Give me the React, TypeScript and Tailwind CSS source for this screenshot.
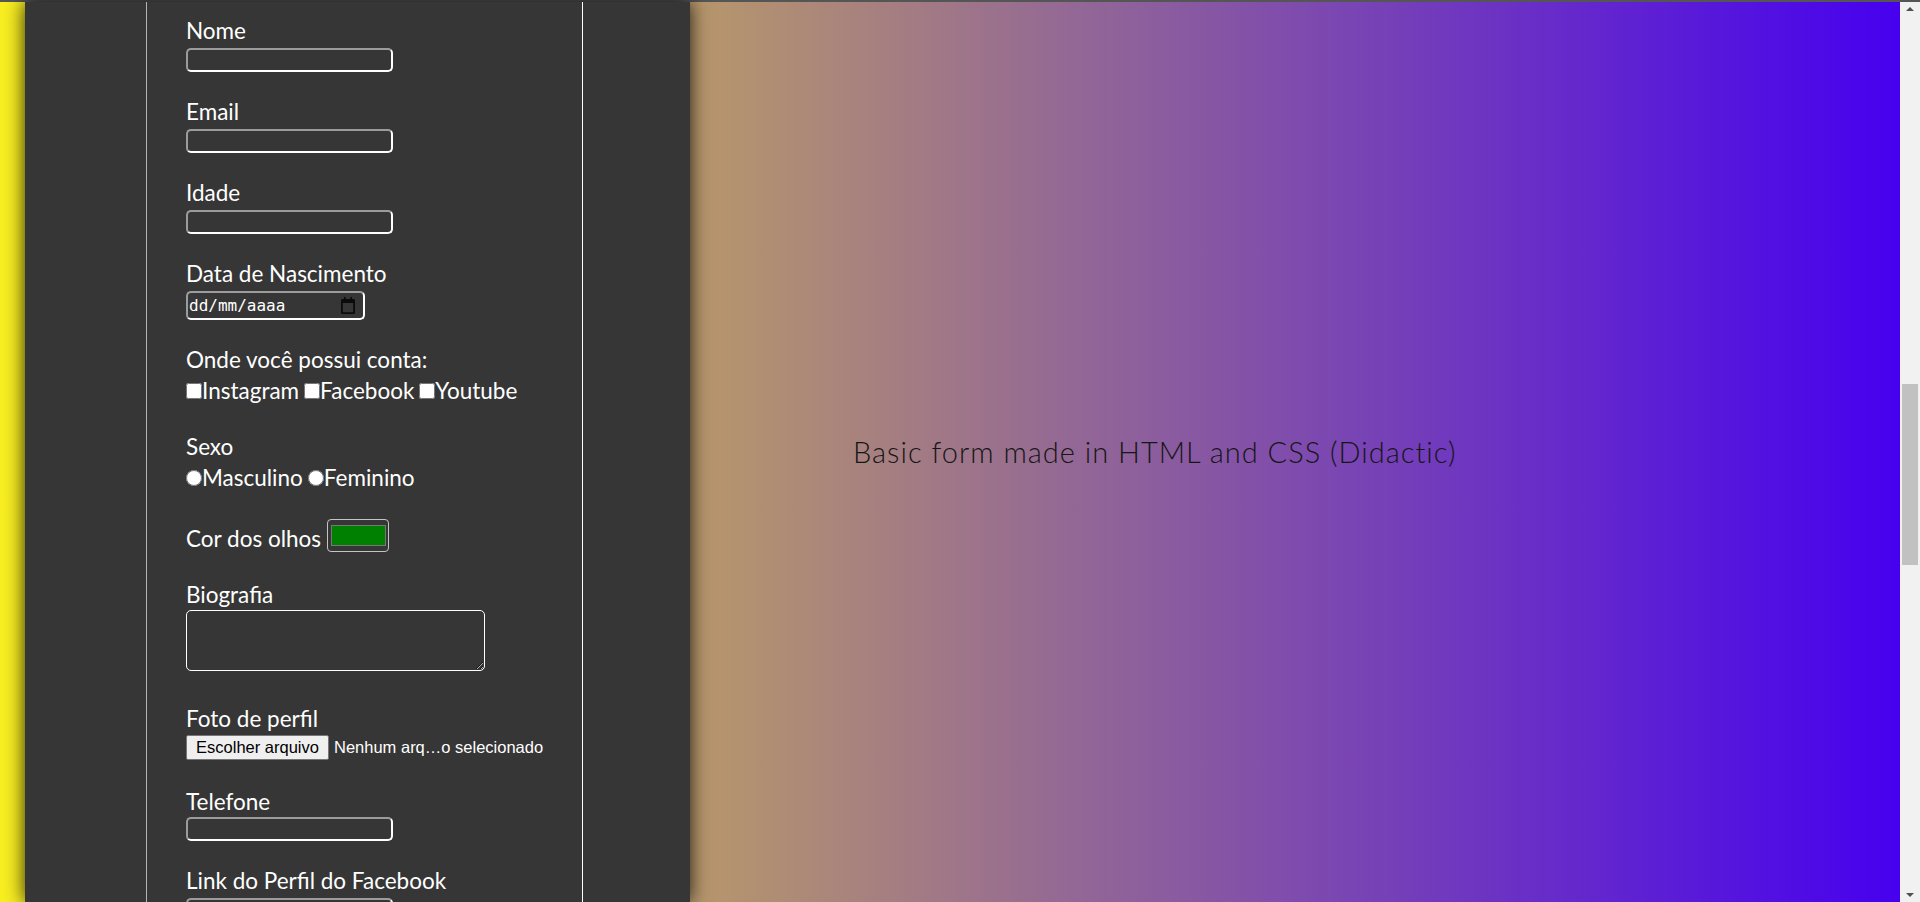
import React from 'react';

const labelCls = 'block h-[28px] text-[22.5px] leading-[28px] text-white';
const inputCls =
  'block h-[24px] w-[207px] rounded-[5px] border-2 border-white border-t-[#9c9c9c] border-l-[#9c9c9c] bg-transparent outline-none';

function Field({ label, mt }: { label: string; mt: string }): React.ReactElement {
  return (
    <div className={mt}>
      <label className={labelCls}>{label}</label>
      <input type="text" className={`mt-[3px] ${inputCls}`} />
    </div>
  );
}

function CalendarIcon(): React.ReactElement {
  return (
    <svg width="16" height="17" viewBox="0 0 16 17">
      <path
        d="M4 0v2H2.5A1.5 1.5 0 0 0 1 3.5v12A1.5 1.5 0 0 0 2.5 17h11a1.5 1.5 0 0 0 1.5-1.5v-12A1.5 1.5 0 0 0 13.5 2H12V0h-1.6v2H5.6V0H4zM2.8 6h10.4v9.2H2.8V6z"
        fill="#0b0b0b"
      />
    </svg>
  );
}

function Scrollbar(): React.ReactElement {
  return (
    <div className="flex w-[20px] flex-col items-center bg-[#f1f1f1]">
      <div className="mt-[5px] h-0 w-0 border-x-[4px] border-b-[4px] border-x-transparent border-b-[#505050]" />
      <div className="mt-[373px] h-[181px] w-[16px] bg-[#c1c1c1]" />
      <div className="mt-auto mb-[5px] h-0 w-0 border-x-[4px] border-t-[4px] border-x-transparent border-t-[#505050]" />
    </div>
  );
}

export default function App(): React.ReactElement {
  return (
    <div className="flex h-[902px] w-full flex-col overflow-hidden">
      <div className="h-[2px] bg-[#555555]" />
      <div className="flex min-h-0 flex-1">
        <div className="flex flex-1 bg-[linear-gradient(to_right,#f8ee20,#4600ef)]">
          <div className="ml-[25px] flex w-[665px] bg-[#363636] pl-[121px] shadow-[0_0_18px_rgba(0,0,0,0.85)]">
            <form className="w-[437px] border-l border-r border-l-[#b4b4b4] border-r-white pl-[39px] pt-[15px] font-['Lato',sans-serif]">
              <Field label="Nome" mt="" />
              <Field label="Email" mt="mt-[26px]" />
              <Field label="Idade" mt="mt-[26px]" />

              <div className="mt-[26px]">
                <label className={labelCls}>Data de Nascimento</label>
                <div className="mt-[3px] flex h-[29px] w-[179px] items-center justify-between rounded-[5px] border-2 border-white border-t-[#9c9c9c] border-l-[#9c9c9c] pl-[1px] pr-[7px]">
                  <span className="font-['DejaVu_Sans_Mono',monospace] text-[16px] text-white">dd/mm/aaaa</span>
                  <CalendarIcon />
                </div>
              </div>

              <div className="mt-[26px]">
                <label className={labelCls}>Onde você possui conta:</label>
                <div className="mt-[3px] flex h-[28px] items-center text-[22.5px] text-white">
                  <input type="checkbox" className="h-[16px] w-[16px]" />
                  <span>Instagram</span>
                  <span className="w-[5px]" />
                  <input type="checkbox" className="h-[16px] w-[16px]" />
                  <span>Facebook</span>
                  <span className="w-[5px]" />
                  <input type="checkbox" className="h-[16px] w-[16px]" />
                  <span>Youtube</span>
                </div>
              </div>

              <div className="mt-[28px]">
                <label className={labelCls}>Sexo</label>
                <div className="mt-[3px] flex h-[28px] items-center text-[22.5px] text-white">
                  <input type="radio" name="sexo" className="h-[16px] w-[16px]" />
                  <span>Masculino</span>
                  <span className="w-[5px]" />
                  <input type="radio" name="sexo" className="h-[16px] w-[16px]" />
                  <span>Feminino</span>
                </div>
              </div>

              <div className="mt-[27px] flex h-[33px] items-center gap-[6px]">
                <label className="mt-[6px] text-[22.5px] leading-[28px] text-white">Cor dos olhos</label>
                <div className="flex h-[33px] w-[62px] items-center justify-center rounded-[4px] border border-[#c4c4c4]">
                  <div className="h-[21px] w-[55px] border border-[#777777] bg-[#008000]" />
                </div>
              </div>

              <div className="mt-[29px]">
                <label className={labelCls}>Biografia</label>
                <textarea className="mt-[1px] block h-[61px] w-[299px] rounded-[5px] border border-white bg-transparent outline-none" />
              </div>

              <div className="mt-[34px]">
                <label className={labelCls}>Foto de perfil</label>
                <div className="mt-[2px] flex h-[25px] items-center gap-[5px] font-['Liberation_Sans',Arial,sans-serif] text-[16.5px]">
                  <span className="flex h-[25px] w-[143px] items-center justify-center rounded-[2px] border border-[#767676] bg-[#efefef] text-black">
                    Escolher arquivo
                  </span>
                  <span className="text-white">Nenhum arq…o selecionado</span>
                </div>
              </div>

              <div className="mt-[28px]">
                <label className={labelCls}>Telefone</label>
                <input type="text" className={`mt-[1px] ${inputCls}`} />
              </div>

              <Field label="Link do Perfil do Facebook" mt="mt-[26px]" />
            </form>
          </div>

          <div className="flex flex-1 items-center">
            <p className="ml-[163px] font-['Lato',sans-serif] text-[29px] font-light tracking-[1px] text-[#161616]">
              Basic form made in HTML and CSS (Didactic)
            </p>
          </div>
        </div>
        <Scrollbar />
      </div>
    </div>
  );
}
